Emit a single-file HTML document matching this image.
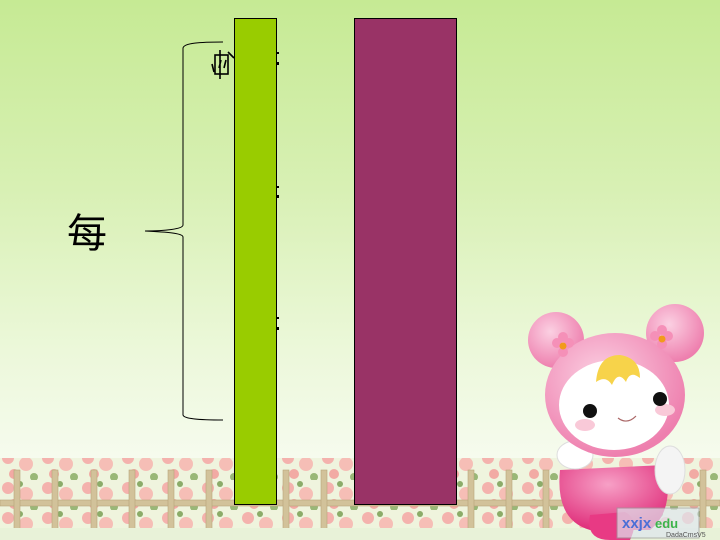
<!DOCTYPE html>
<html><head><meta charset="utf-8"><style>
html,body{margin:0;padding:0}
body{width:720px;height:540px;overflow:hidden;position:relative;background:linear-gradient(180deg,#c6ea94 0%,#d8f0b4 35%,#ecf8da 65%,#f6fbee 85%,#f2f7e8 100%);font-family:"Liberation Sans","Noto Sans CJK SC",sans-serif}
svg{position:absolute;left:0;top:0}
.t{position:absolute;left:67px;top:210px;font-size:40px;color:#000;line-height:48px}
</style></head><body>
<svg width="720" height="540" viewBox="0 0 720 540">
<defs>
<radialGradient id="pk" cx="40%" cy="35%" r="65%"><stop offset="0" stop-color="#fbd0e2"/><stop offset="1" stop-color="#ee7fae"/></radialGradient>
<radialGradient id="bd" cx="45%" cy="30%" r="70%"><stop offset="0" stop-color="#f7a0c6"/><stop offset="1" stop-color="#e0307c"/></radialGradient>
<pattern id="fl" x="0" y="0" width="40" height="30" patternUnits="userSpaceOnUse">
<rect width="40" height="30" fill="#eef3dc"/>
<circle cx="8" cy="8" r="6" fill="#f4aaa6"/><circle cx="26" cy="14" r="7" fill="#f6b7b0"/><circle cx="14" cy="24" r="5" fill="#f2a19c"/><circle cx="34" cy="27" r="4" fill="#8fb06a"/><circle cx="20" cy="4" r="3" fill="#7fa35a"/>
</pattern>
</defs>
<rect x="0" y="458" width="720" height="70" fill="url(#fl)" opacity="0.9"/>
<!-- fence -->
<g fill="#d2c29a" stroke="#b8a37a" stroke-width="0.6">
<rect x="0" y="500" width="720" height="6"/>
<rect x="14" y="470" width="6" height="62"/><rect x="52" y="470" width="6" height="62"/><rect x="91" y="470" width="6" height="62"/><rect x="129" y="470" width="6" height="62"/><rect x="168" y="470" width="6" height="62"/><rect x="206" y="470" width="6" height="62"/><rect x="283" y="470" width="6" height="62"/><rect x="321" y="470" width="6" height="62"/><rect x="468" y="470" width="6" height="62"/><rect x="506" y="470" width="6" height="62"/><rect x="543" y="470" width="6" height="62"/><rect x="700" y="470" width="6" height="62"/>
</g>
<rect x="0" y="528" width="720" height="12" fill="#e8f2d8"/>
<!-- brace -->
<path d="M223 42 C200 42 184 43 183 48 L183 225 C183 229 165 231 145 231 C165 232 183 233 183 237 L183 415 C184 419 200 420 223 420" fill="none" stroke="#000" stroke-width="1"/>
<g stroke="#000" stroke-width="1.6" fill="none">
<rect x="215" y="55" width="13" height="19"/><path d="M220 50 L220 79 M212 64 L214 72 M221 60 L219 68 M226 60 L224 68 M228 52 L234 58"/>
</g>
<rect x="234.5" y="18.5" width="42" height="486" fill="#99cc00" stroke="#000" stroke-width="1"/>
<rect x="354.5" y="18.5" width="102" height="486" fill="#993366" stroke="#000" stroke-width="1"/>
<g fill="#000"><rect x="277" y="52" width="2" height="2"/><rect x="277" y="62" width="2" height="3"/><rect x="277" y="186" width="2" height="2"/><rect x="277" y="195" width="2" height="3"/><rect x="277" y="317" width="2" height="2"/><rect x="277" y="327" width="2" height="3"/></g>
<!-- character -->
<circle cx="556" cy="340" r="28" fill="url(#pk)"/>
<circle cx="675" cy="333" r="29" fill="url(#pk)"/>
<path d="M560 470 Q555 520 590 530 L650 530 Q675 510 665 465 Z" fill="url(#bd)"/>
<path d="M590 515 Q585 540 610 540 L630 540 Q640 520 625 512 Z" fill="#e83a84"/>
<ellipse cx="575" cy="455" rx="18" ry="14" fill="#fff" stroke="#ddd"/>
<ellipse cx="670" cy="470" rx="15" ry="24" fill="#f4f4f4" stroke="#ddd"/>
<ellipse cx="615" cy="395" rx="70" ry="62" fill="url(#pk)"/>
<ellipse cx="614" cy="405" rx="55" ry="45" fill="#fff"/>
<ellipse cx="585" cy="425" rx="10" ry="6" fill="#f9c9d8"/><ellipse cx="665" cy="410" rx="10" ry="6" fill="#f9c9d8"/>
<path d="M596 382 Q598 355 620 355 Q640 358 640 378 Q630 370 626 382 Q618 370 612 385 Q606 375 596 382Z" fill="#f7d34a"/>
<circle cx="590" cy="411" r="7" fill="#111"/><circle cx="660" cy="399" r="7" fill="#111"/>
<path d="M618 418 Q627 425 636 416" stroke="#a66" fill="none" stroke-width="1.2"/>
<g fill="#f590b8"><circle cx="557" cy="343" r="5"/><circle cx="569" cy="343" r="5"/><circle cx="563" cy="337" r="5"/><circle cx="563" cy="352" r="5"/><circle cx="655" cy="336" r="5"/><circle cx="668" cy="336" r="5"/><circle cx="662" cy="330" r="5"/><circle cx="662" cy="344" r="5"/></g>
<circle cx="563" cy="346" r="3.5" fill="#f29a1c"/><circle cx="662" cy="339" r="3.5" fill="#f29a1c"/>
<rect x="617" y="508" width="82" height="30" fill="#dfe6ee" opacity="0.7" stroke="#999"/>
<text x="622" y="528" font-size="15" font-weight="bold" fill="#4a6fd6" font-family="Liberation Sans,sans-serif">xxjx</text>
<text x="655" y="528" font-size="13" font-weight="bold" fill="#3cb44a" font-family="Liberation Sans,sans-serif">edu</text>
<text x="666" y="537" font-size="7" fill="#555" font-family="Liberation Sans,sans-serif">DadaCmsV5</text>
</svg>
<div class="t">每</div>
</body></html>
